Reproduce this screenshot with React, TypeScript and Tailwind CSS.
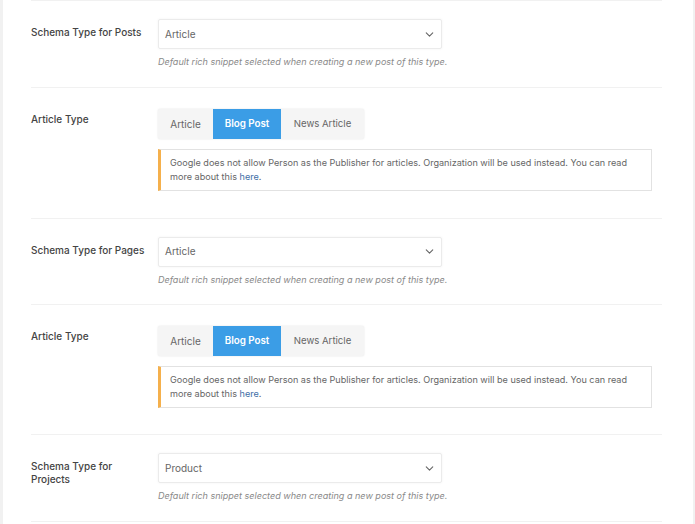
import { ChevronDown } from 'lucide-react';

const hint = 'Default rich snippet selected when creating a new post of this type.';

function SelectRow({ label, value }: { label: string; value: string }) {
  return (
    <div className="flex border-b border-[#f1f1f1] pt-[18px] h-[86.5px]">
      <div className="w-[127px] pt-[7px] pr-[13px] text-[10px] leading-[13px] font-medium text-[#444]">{label}</div>
      <div>
        <div className="flex items-center justify-between w-[284px] h-[30px] pl-[6px] pr-[5px] bg-white border border-[#ebebeb] rounded-[2px] text-[10px] text-[#666] shadow-[0_0_3px_rgba(0,0,0,0.05)]">
          {value}
          <ChevronDown className="w-[13px] h-[13px] text-[#666]" strokeWidth={2} />
        </div>
        <p className="mt-[7px] text-[9.05px] leading-[12px] italic text-[#8a8a8a] whitespace-nowrap">{hint}</p>
      </div>
    </div>
  );
}

function ArticleRow({ height }: { height: string }) {
  return (
    <div className={`flex border-b border-[#f1f1f1] pt-[21px] ${height}`}>
      <div className="w-[127px] text-[10px] leading-[20px] font-medium text-[#444]">Article Type</div>
      <div>
        <div className="flex w-fit h-[30px] bg-[#f5f5f5] rounded-[2px] text-[10px] text-[#666] shadow-[0_0_2px_rgba(0,0,0,0.12)]">
          <div className="flex items-center justify-center w-[55px] pt-px">Article</div>
          <div className="flex items-center justify-center w-[68px] pt-px bg-[#3b9de6] text-white text-[9.8px] font-semibold">Blog Post</div>
          <div className="flex items-center justify-center w-[83px] pt-px text-[9.6px]">News Article</div>
        </div>
        <div className="mt-[10px] w-[494px] h-[42px] pl-[9px] pr-2 pt-[6px] bg-white border border-[#e2e2e2] border-l-[3px] border-l-[#f5b04c] text-[9.1px] leading-[14px] text-[#666]">
          Google does not allow Person as the Publisher for articles. Organization will be used instead. You can read more about this <a className="text-[#3f6ea6]">here</a>.
        </div>
      </div>
    </div>
  );
}

export default function App() {
  return (
    <div className="w-[695px] h-[524px] overflow-hidden bg-white border-l-[3px] border-r-[2px] border-[#f1f1f1] font-['Inter',sans-serif]">
      <div className="ml-[28px] mr-[31px] border-t border-[#f1f1f1]">
        <SelectRow label="Schema Type for Posts" value="Article" />
        <ArticleRow height="h-[131px]" />
        <SelectRow label="Schema Type for Pages" value="Article" />
        <ArticleRow height="h-[130px]" />
        <SelectRow label="Schema Type for Projects" value="Product" />
      </div>
    </div>
  );
}
